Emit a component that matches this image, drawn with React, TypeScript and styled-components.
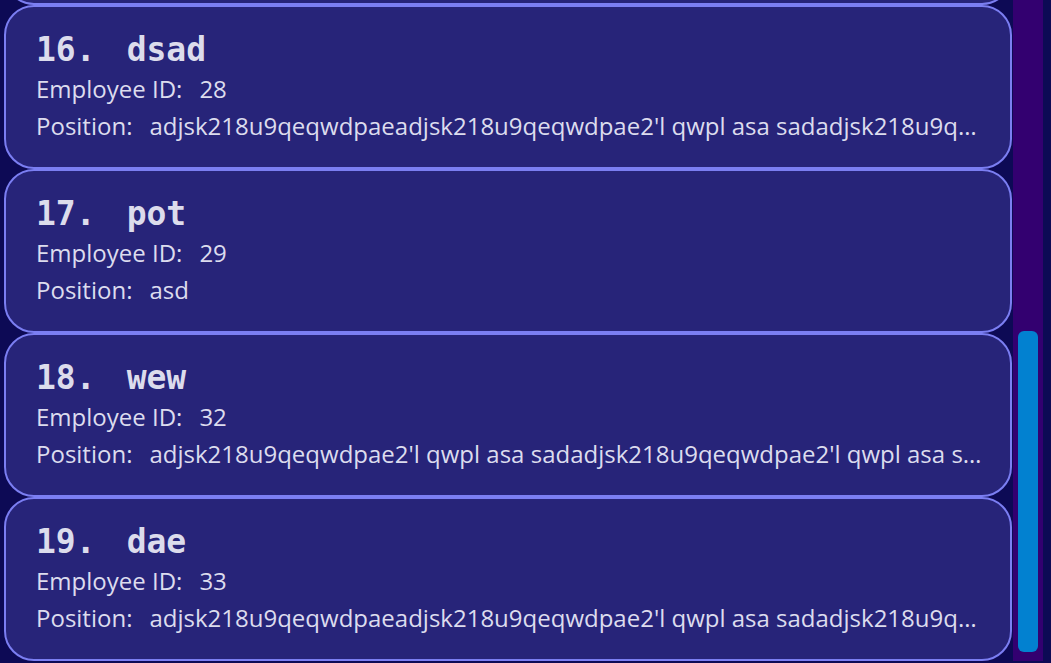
import React from "react";
import styled, { createGlobalStyle } from "styled-components";

type Employee = { id: number; name: string; position: string };

const LONG_A =
  "adjsk218u9qeqwdpaeadjsk218u9qeqwdpae2'l qwpl asa sadadjsk218u9qeqwdpae2'l qwpl asa sad";
const LONG_B =
  "adjsk218u9qeqwdpae2'l qwpl asa sadadjsk218u9qeqwdpae2'l qwpl asa sadadjsk218u9qeqwdpae";

const employees: Employee[] = [
  { id: 1, name: "john", position: "manager" },
  { id: 2, name: "anna", position: "developer" },
  { id: 4, name: "mark", position: "designer" },
  { id: 5, name: "lisa", position: "tester" },
  { id: 7, name: "tom", position: "analyst" },
  { id: 8, name: "kate", position: "support" },
  { id: 10, name: "bob", position: "developer" },
  { id: 11, name: "eve", position: "hr" },
  { id: 13, name: "sam", position: "sales" },
  { id: 15, name: "max", position: "intern" },
  { id: 17, name: "ian", position: "devops" },
  { id: 19, name: "zoe", position: "writer" },
  { id: 21, name: "leo", position: "admin" },
  { id: 24, name: "ada", position: "engineer" },
  { id: 26, name: "qwe", position: "asd" },
  { id: 28, name: "dsad", position: LONG_A },
  { id: 29, name: "pot", position: "asd" },
  { id: 32, name: "wew", position: LONG_B },
  { id: 33, name: "dae", position: LONG_A },
];

const GlobalStyle = createGlobalStyle`
  html, body {
    margin: 0;
    padding: 0;
    background: #0d0a55;
  }
  #root {
    height: 100vh;
  }
`;

const Page = styled.div`
  box-sizing: border-box;
  height: 100vh;
  display: flex;
  padding: 0 8px 2px 0;
  background: #0d0a55;
  font-family: "Open Sans", "Noto Sans", sans-serif;
`;

const Viewport = styled.main`
  flex: 1;
  min-width: 0;
  overflow: hidden;
  display: flex;
  flex-direction: column;
  justify-content: flex-end;
  padding: 0 1px 0 4px;
`;

const Card = styled.article`
  flex-shrink: 0;
  box-sizing: border-box;
  display: flex;
  flex-direction: column;
  padding: 23px 20px 23px 30px;
  background: #272479;
  border: 2px solid #7b7ef2;
  border-radius: 30px;
  color: #dcdcee;
`;

const Title = styled.h2`
  margin: 0;
  display: flex;
  gap: 31px;
  font-family: "DejaVu Sans Mono", "Liberation Mono", monospace;
  font-weight: 700;
  font-size: 33px;
  line-height: 40px;
  color: #dcdcec;
  white-space: nowrap;
`;

const Line = styled.div`
  display: flex;
  gap: 17px;
  font-size: 24px;
  line-height: 37px;
  white-space: nowrap;
  min-width: 0;
`;

const Label = styled.span`
  flex-shrink: 0;
`;

const Value = styled.span`
  flex: 1;
  min-width: 0;
  overflow: hidden;
  text-overflow: ellipsis;
`;

const ScrollTrack = styled.div`
  width: 30px;
  flex-shrink: 0;
  box-sizing: border-box;
  display: flex;
  flex-direction: column;
  justify-content: flex-end;
  padding: 0 5px 9px;
  background: #330070;
`;

const ScrollThumb = styled.div`
  height: 321px;
  border-radius: 6px;
  background: #0281d0;
`;

export default function App() {
  return (
    <>
      <GlobalStyle />
      <Page>
        <Viewport>
          {employees.map((e, i) => (
            <Card key={e.id}>
              <Title>
                <span>{i + 1}.</span>
                <span>{e.name}</span>
              </Title>
              <Line>
                <Label>Employee ID:</Label>
                <Value>{e.id}</Value>
              </Line>
              <Line>
                <Label>Position:</Label>
                <Value>{e.position}</Value>
              </Line>
            </Card>
          ))}
        </Viewport>
        <ScrollTrack>
          <ScrollThumb />
        </ScrollTrack>
      </Page>
    </>
  );
}
